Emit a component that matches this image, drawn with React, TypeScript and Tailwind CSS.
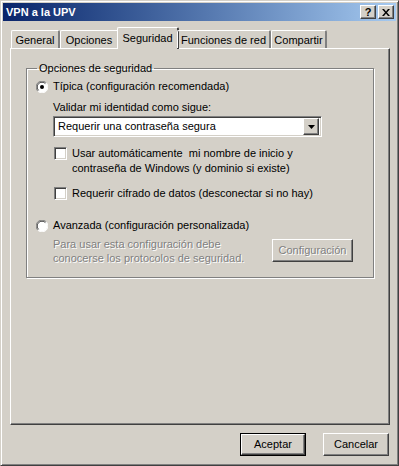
import React from 'react';

const raised = 'border border-t-white border-l-white border-r-[#404040] border-b-[#404040] shadow-[inset_-1px_-1px_0_#808080]';
const sunken = 'border border-t-[#808080] border-l-[#808080] border-r-white border-b-white shadow-[inset_1px_1px_0_#404040,inset_-1px_-1px_0_#d4d0c8]';

const Radio: React.FC<{ checked?: boolean }> = ({ checked }) => (
  <svg width="12" height="12" viewBox="0 0 12 12" className="shrink-0">
    <circle cx="6" cy="6" r="5.5" fill="#fff" />
    <path d="M10.2 1.8 A5.5 5.5 0 0 0 1.8 10.2" fill="none" stroke="#808080" strokeWidth="1" />
    <path d="M9.4 2.6 A4.5 4.5 0 0 0 2.6 9.4" fill="none" stroke="#404040" strokeWidth="1" />
    <path d="M1.8 10.2 A5.5 5.5 0 0 0 10.2 1.8" fill="none" stroke="#ffffff" strokeWidth="1" />
    {checked && <circle cx="6" cy="6" r="2" fill="#000" />}
  </svg>
);

const Check: React.FC = () => <div className={`w-[13px] h-[13px] shrink-0 bg-white ${sunken}`} />;

const tabs = [
  { label: 'General', w: 'w-[49px]' },
  { label: 'Opciones', w: 'w-[59px]' },
  { label: 'Seguridad', w: 'w-[62px]', active: true },
  { label: 'Funciones de red', w: 'w-[94px]' },
  { label: 'Compartir', w: 'w-[56px]' },
];

export default function App() {
  return (
    <div className="w-[399px] h-[466px] bg-[#d4d0c8] font-['Liberation_Sans',sans-serif] text-[11px] text-black leading-[13px] select-none border border-t-[#d4d0c8] border-l-[#d4d0c8] border-r-[#404040] border-b-[#404040] shadow-[inset_1px_1px_0_#fff,inset_-1px_-1px_0_#808080] p-[2px] flex flex-col">
      {/* title bar */}
      <div className="h-[18px] bg-gradient-to-r from-[#0a246a] to-[#a6caf0] flex items-center pl-[3px] pr-[2px]">
        <span className="text-white font-bold text-[11px] flex-1">VPN a la UPV</span>
        <div className="flex gap-[2px]">
          <div className={`w-[16px] h-[14px] bg-[#d4d0c8] ${raised} flex items-center justify-center font-bold text-[11px] leading-none`}>?</div>
          <div className={`w-[16px] h-[14px] bg-[#d4d0c8] ${raised} flex items-center justify-center`}>
            <svg width="8" height="7" viewBox="0 0 8 7">
              <path d="M0 0h2l2 2.5L6 0h2L5 3.5 8 7H6L4 4.5 2 7H0l3-3.5z" fill="#000" />
            </svg>
          </div>
        </div>
      </div>

      {/* tabs */}
      <div className="flex items-end h-[22px] mt-[5px] pl-[8px] relative z-10">
        {tabs.map((t) =>
          t.active ? (
            <div key={t.label} className={`${t.w} h-[22px] -mx-[2px] -mb-[1px] bg-[#d4d0c8] border-l border-t border-white border-r-2 border-r-[#404040] rounded-t-[2px] flex items-start justify-center pt-[4px]`}>
              {t.label}
            </div>
          ) : (
            <div key={t.label} className={`${t.w} h-[18px] border-l border-t border-white border-r-2 border-r-[#808080] rounded-t-[2px] flex items-start justify-center pt-[3px]`}>
              {t.label}
            </div>
          )
        )}
      </div>

      {/* panel */}
      <div className="ml-[7px] w-[380px] h-[377px] border border-t-white border-l-white border-r-[#404040] border-b-[#404040] shadow-[inset_-1px_-1px_0_#808080] pt-[13px] pl-[15px]">
        <fieldset className="w-[348px] h-[216px] border border-[#808080] shadow-[inset_1px_1px_0_#fff,1px_1px_0_#fff] pl-[9px] pr-0 pt-0 m-0">
          <legend className="ml-[1px] px-[2px] -mb-[2px]">Opciones de seguridad</legend>

          <div className="flex items-center gap-[5px] h-[13px] mt-[7px]">
            <Radio checked />
            <span>Típica (configuración recomendada)</span>
          </div>

          <div className="ml-[17px] mt-[8px]">Validar mi identidad como sigue:</div>

          <div className={`ml-[17px] mt-[2px] w-[269px] h-[21px] bg-white ${sunken} flex items-center pl-[4px] pr-[2px]`}>
            <span className="flex-1">Requerir una contraseña segura</span>
            <div className={`w-[16px] h-[17px] bg-[#d4d0c8] ${raised} flex items-center justify-center`}>
              <svg width="7" height="4" viewBox="0 0 7 4"><path d="M0 0h7L3.5 4z" fill="#000" /></svg>
            </div>
          </div>

          <div className="ml-[18px] mt-[10px] flex items-start gap-[5px]">
            <Check />
            <div className="leading-[15px] -mt-[1px]">
              Usar automáticamente&nbsp; mi nombre de inicio y<br />contraseña de Windows (y dominio si existe)
            </div>
          </div>

          <div className="ml-[18px] mt-[11px] flex items-center gap-[5px]">
            <Check />
            <span>Requerir cifrado de datos (desconectar si no hay)</span>
          </div>

          <div className="flex items-center gap-[5px] h-[13px] mt-[19px]">
            <Radio />
            <span>Avanzada (configuración personalizada)</span>
          </div>

          <div className="ml-[17px] mt-[5px] flex items-start">
            <div className="w-[219px] leading-[14px] text-[#808080] [text-shadow:1px_1px_0_#fff]">
              Para usar esta configuración debe<br />conocerse los protocolos de seguridad.
            </div>
            <div className={`mt-[2px] w-[81px] h-[23px] ${raised} flex items-center justify-center text-[#808080] [text-shadow:1px_1px_0_#fff]`}>
              Configuración
            </div>
          </div>
        </fieldset>
      </div>

      {/* buttons */}
      <div className="flex justify-end gap-[17px] mt-[8px] pr-[7px]">
        <div className="w-[66px] h-[23px] border border-black flex">
          <div className={`flex-1 ${raised} flex items-center justify-center`}>Aceptar</div>
        </div>
        <div className={`w-[66px] h-[23px] ${raised} flex items-center justify-center`}>Cancelar</div>
      </div>
    </div>
  );
}
